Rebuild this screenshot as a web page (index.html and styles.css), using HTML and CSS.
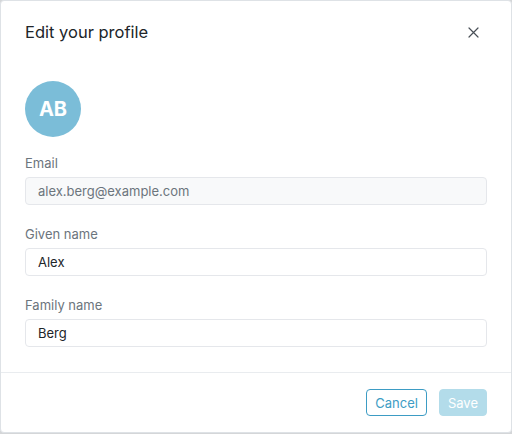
FILE: index.html
```html
<!DOCTYPE html>
<html lang="en">
<head>
  <meta charset="UTF-8">
  <meta name="viewport" content="width=device-width, initial-scale=1.0">
  <title>Edit your profile</title>
  <link rel="stylesheet" href="styles.css">
</head>
<body>

  <div class="modal">
    <div class="modal-header">
      <h1 class="modal-title">Edit your profile</h1>
      <button class="close-btn" aria-label="Close">
        <svg width="11" height="11" viewBox="0 0 11 11">
          <path d="M1 1L10 10M10 1L1 10" stroke="#495057" stroke-width="1.2" stroke-linecap="round"/>
        </svg>
      </button>
    </div>

    <div class="modal-body">
      <div class="avatar">AB</div>

      <div class="field">
        <label for="email">Email</label>
        <input type="text" id="email" value="alex.berg@example.com" disabled>
      </div>

      <div class="field">
        <label for="given-name">Given name</label>
        <input type="text" id="given-name" value="Alex">
      </div>

      <div class="field">
        <label for="family-name">Family name</label>
        <input type="text" id="family-name" value="Berg">
      </div>
    </div>

    <div class="modal-footer">
      <button class="btn btn-outline">Cancel</button>
      <button class="btn btn-primary" disabled>Save</button>
    </div>
  </div>

</body>
</html>
```

FILE: styles.css
```css
body {
  margin: 0;
  font-family: Inter, "Noto Sans", sans-serif;
  background-color: #d4d6d8;
  color: #212529;
}

.modal {
  width: 510px;
  height: 431px;
  background-color: #fff;
  border: 1px solid #dee2e6;
  border-radius: 4px;
  display: flex;
  flex-direction: column;
}

.modal-header {
  display: flex;
  justify-content: space-between;
  align-items: center;
  padding: 20px 24px 0 24px;
  height: 22px;
}

.modal-title {
  margin: 0;
  font-size: 16.5px;
  font-weight: 400;
  color: #212529;
}

.close-btn {
  border: none;
  background: none;
  padding: 0;
  margin-right: 8px;
  display: flex;
  cursor: pointer;
}

.modal-body {
  padding: 38px 24px 0 24px;
  flex: 1;
}

.avatar {
  width: 56px;
  height: 56px;
  border-radius: 50%;
  background-color: #7bbdd8;
  color: #fff;
  font-size: 20px;
  font-weight: 700;
  display: flex;
  align-items: center;
  justify-content: center;
  margin-bottom: 17px;
}

.field {
  margin-bottom: 20px;
}

.field label {
  display: block;
  font-size: 13px;
  line-height: 18px;
  color: #6c757d;
  margin-bottom: 5px;
}

.field input {
  box-sizing: border-box;
  width: 100%;
  height: 28px;
  padding: 0 12px;
  border: 1px solid #e5e7eb;
  border-radius: 4px;
  font-family: inherit;
  font-size: 13px;
  color: #212529;
  background-color: #fff;
}

.field input:disabled {
  background-color: #f8f9fa;
  color: #6c757d;
}

.modal-footer {
  border-top: 1px solid #e9ecef;
  display: flex;
  justify-content: flex-end;
  gap: 12px;
  padding: 16px 24px 16px 24px;
}

.btn {
  height: 27px;
  padding: 0 8px;
  border-radius: 4px;
  font-family: inherit;
  font-size: 13px;
  cursor: pointer;
}

.btn-outline {
  background-color: #fff;
  border: 1px solid #3d9cc4;
  color: #3d9cc4;
}

.btn-primary {
  background-color: #b3dcea;
  border: 1px solid #b3dcea;
  color: #fff;
}
```
